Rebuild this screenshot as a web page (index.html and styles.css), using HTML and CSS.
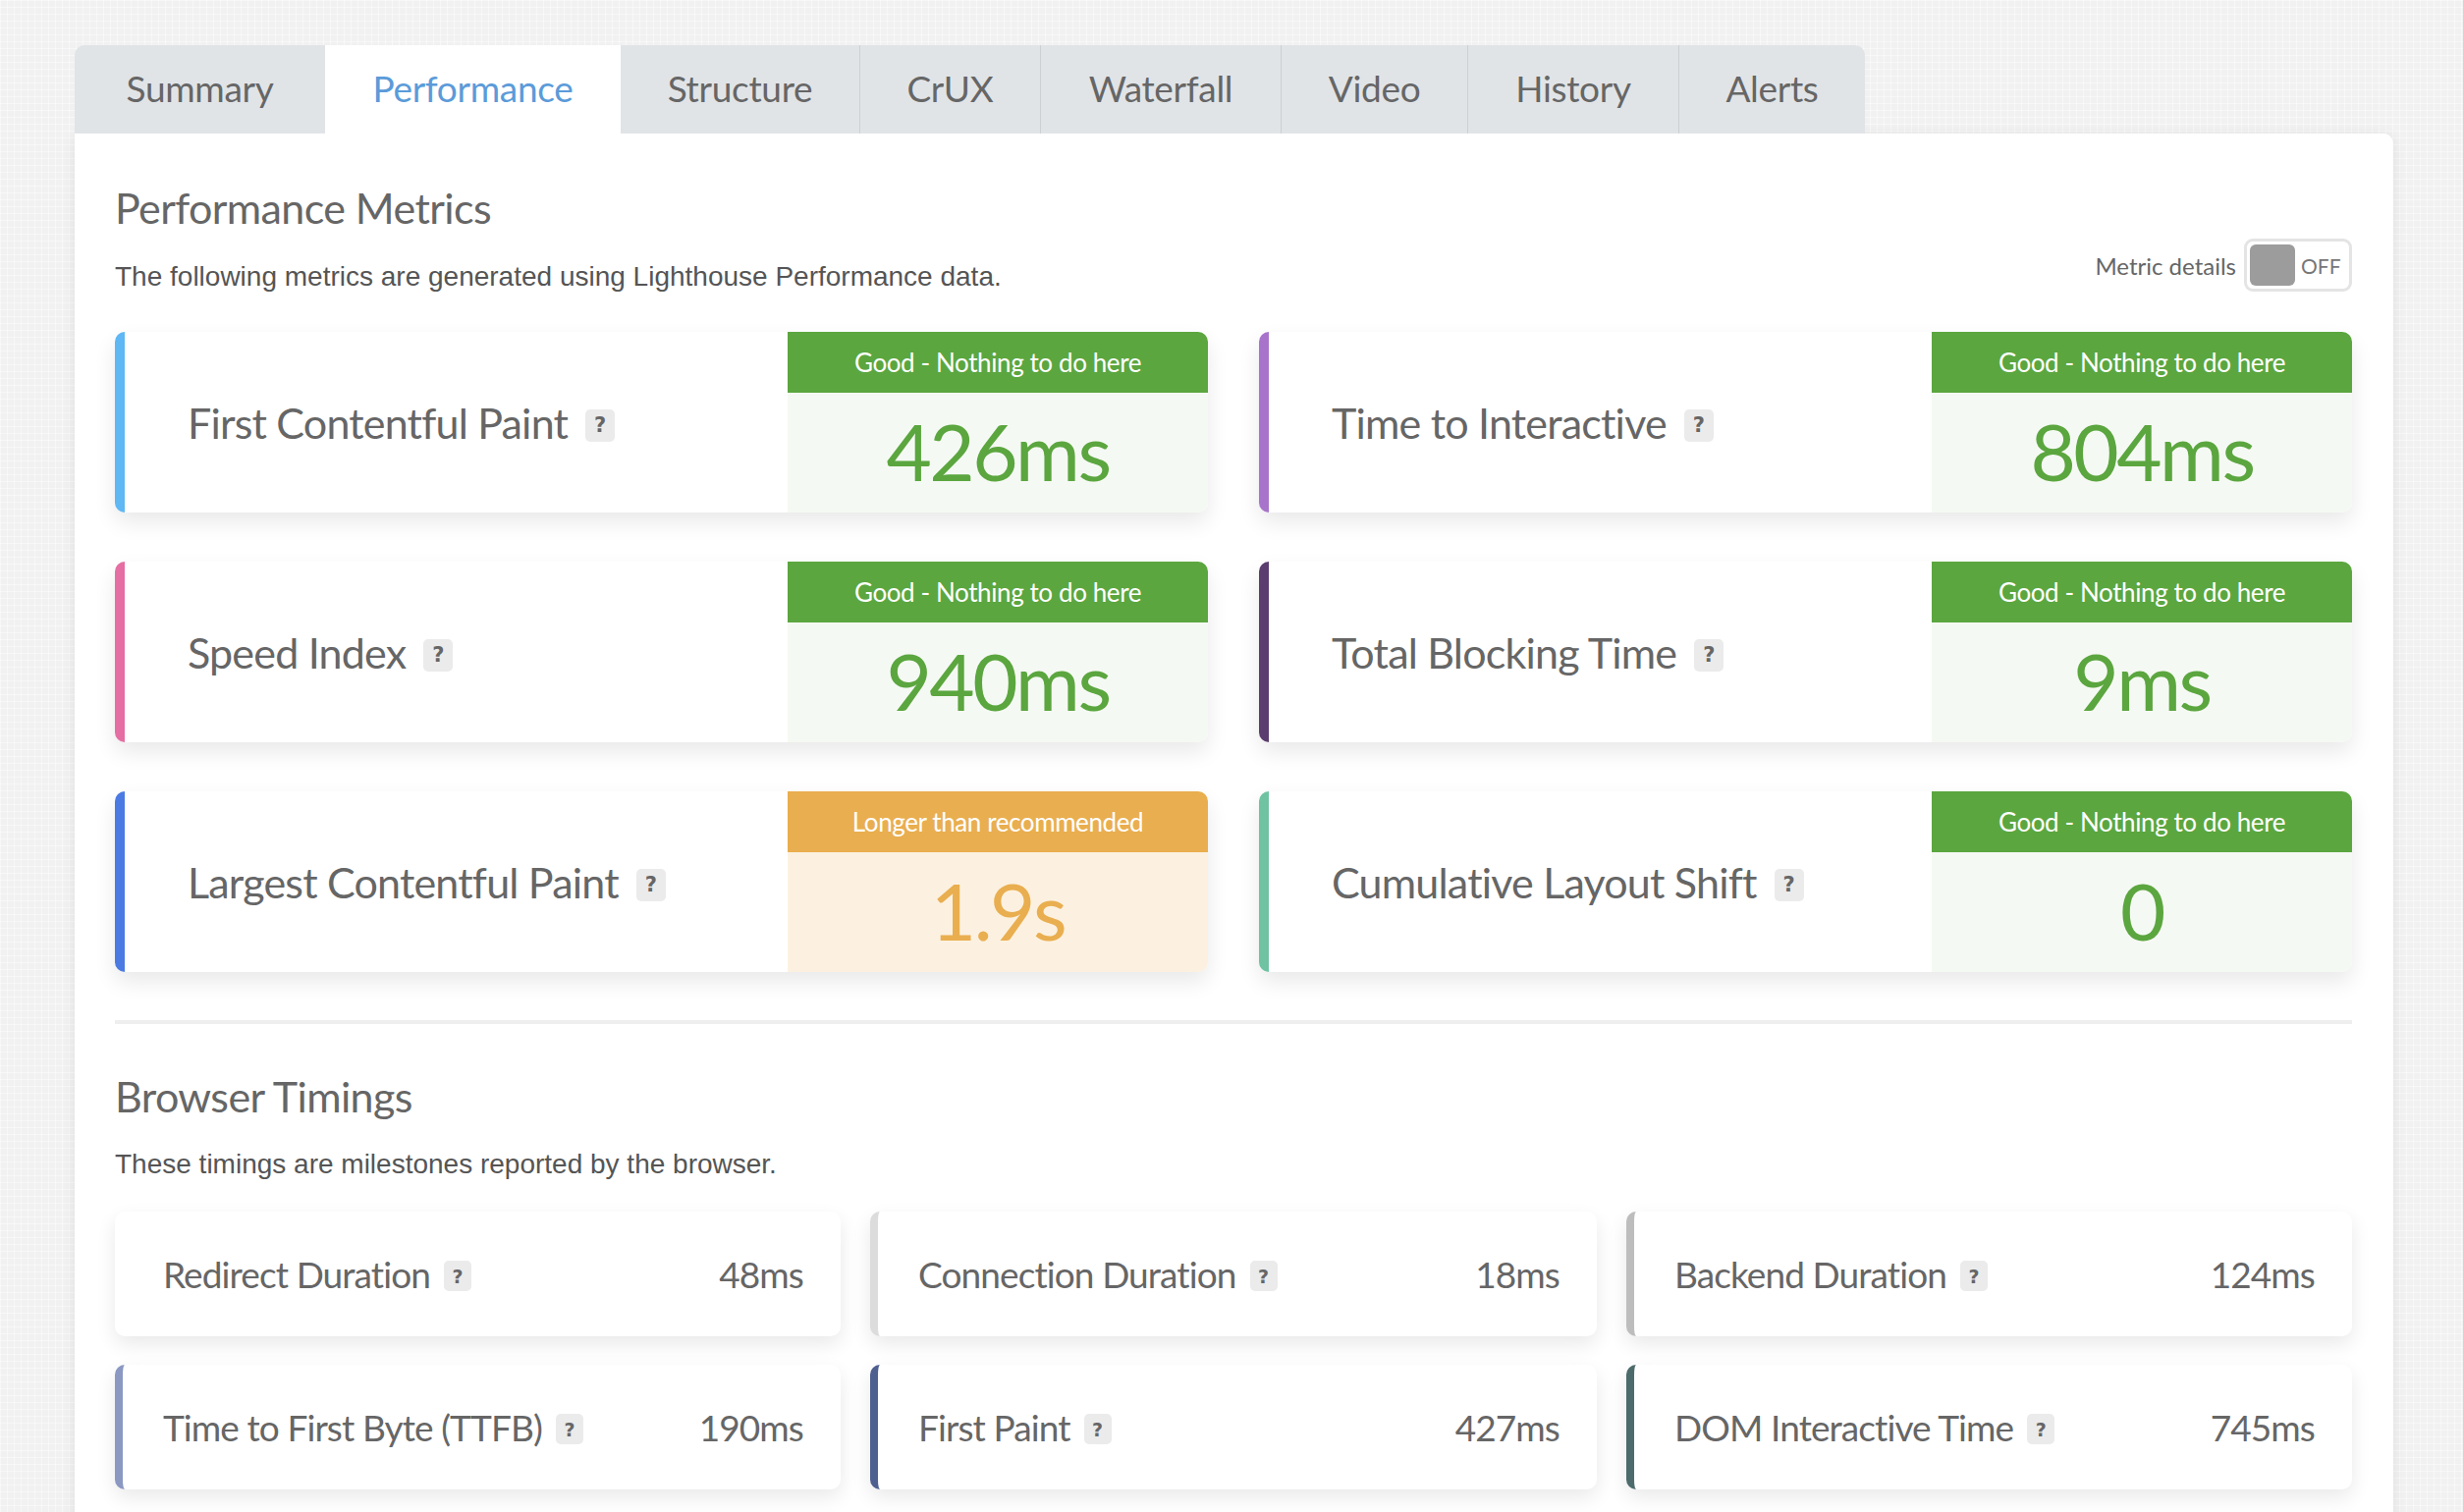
FILE: index.html
```html
<!DOCTYPE html>
<html lang="en">
<head>
<meta charset="utf-8">
<title>Performance</title>
<link rel="stylesheet" href="styles.css">
</head>
<body>
<div class="page">
  <nav class="tabs">
    <div class="tab first">Summary</div>
    <div class="tab active">Performance</div>
    <div class="tab">Structure</div>
    <div class="tab">CrUX</div>
    <div class="tab">Waterfall</div>
    <div class="tab">Video</div>
    <div class="tab">History</div>
    <div class="tab last">Alerts</div>
  </nav>
  <main class="panel">
    <section class="section">
      <h2 class="heading">Performance Metrics</h2>
      <div class="desc-row">
        <p class="desc">The following metrics are generated using Lighthouse Performance data.</p>
        <div class="toggle-wrap">
          <span class="toggle-label">Metric details</span>
          <span class="toggle"><span class="knob"></span><span class="off">OFF</span></span>
        </div>
      </div>
      <div class="metrics">
        <div class="metric fcp">
          <div class="metric-name">First Contentful Paint <span class="help">?</span></div>
          <div class="metric-status good"><div class="status-head">Good - Nothing to do here</div><div class="status-val">426ms</div></div>
        </div>
        <div class="metric tti">
          <div class="metric-name">Time to Interactive <span class="help">?</span></div>
          <div class="metric-status good"><div class="status-head">Good - Nothing to do here</div><div class="status-val">804ms</div></div>
        </div>
        <div class="metric si">
          <div class="metric-name">Speed Index <span class="help">?</span></div>
          <div class="metric-status good"><div class="status-head">Good - Nothing to do here</div><div class="status-val">940ms</div></div>
        </div>
        <div class="metric tbt">
          <div class="metric-name">Total Blocking Time <span class="help">?</span></div>
          <div class="metric-status good"><div class="status-head">Good - Nothing to do here</div><div class="status-val">9ms</div></div>
        </div>
        <div class="metric lcp">
          <div class="metric-name">Largest Contentful Paint <span class="help">?</span></div>
          <div class="metric-status warn"><div class="status-head">Longer than recommended</div><div class="status-val">1.9s</div></div>
        </div>
        <div class="metric cls">
          <div class="metric-name">Cumulative Layout Shift <span class="help">?</span></div>
          <div class="metric-status good"><div class="status-head">Good - Nothing to do here</div><div class="status-val">0</div></div>
        </div>
      </div>
    </section>
    <hr class="divider">
    <section class="section timings-section">
      <h2 class="heading">Browser Timings</h2>
      <p class="desc">These timings are milestones reported by the browser.</p>
      <div class="timings">
        <div class="timing t-redirect"><span class="timing-name">Redirect Duration <span class="help">?</span></span><span class="timing-val">48ms</span></div>
        <div class="timing t-conn"><span class="timing-name">Connection Duration <span class="help">?</span></span><span class="timing-val">18ms</span></div>
        <div class="timing t-backend"><span class="timing-name">Backend Duration <span class="help">?</span></span><span class="timing-val">124ms</span></div>
        <div class="timing t-ttfb"><span class="timing-name">Time to First Byte (TTFB) <span class="help">?</span></span><span class="timing-val">190ms</span></div>
        <div class="timing t-fp"><span class="timing-name">First Paint <span class="help">?</span></span><span class="timing-val">427ms</span></div>
        <div class="timing t-dom"><span class="timing-name">DOM Interactive Time <span class="help">?</span></span><span class="timing-val">745ms</span></div>
      </div>
    </section>
  </main>
</div>
</body>
</html>
```
FILE: styles.css
```css
* { box-sizing: border-box; }
html, body { margin: 0; padding: 0; }
body {
  background-color: #f1f1f1;
  background-image:
    linear-gradient(rgba(255,255,255,0.45) 1px, transparent 1px),
    linear-gradient(90deg, rgba(255,255,255,0.45) 1px, transparent 1px);
  background-size: 7px 7px;
  font-family: "Lato", "Noto Sans", sans-serif;
  color: #666;
  height: 1540px;
  overflow: hidden;
}
.page { padding: 46px 0 0 76px; }

.tabs { display: flex; height: 90px; }
.tab {
  display: flex; align-items: center; justify-content: center;
  background: #e1e4e7;
  color: #666;
  font-size: 37px;
  padding: 0 40px 4px;
  border-left: 1px solid #cdd0d3;
  letter-spacing: -0.3px;
}
.tab.first { border-left: none; border-top-left-radius: 10px; width: 255px; }
.tab.active { background: #fff; color: #5b9bd9; border-left: none; width: 301px; }
.tab.active + .tab { border-left: none; }
.tab.last { border-top-right-radius: 10px; }
.tab:nth-child(3) { width: 243px; }
.tab:nth-child(4) { width: 184px; }
.tab:nth-child(5) { width: 245px; }
.tab:nth-child(6) { width: 190px; }
.tab:nth-child(7) { width: 215px; }
.tab:nth-child(8) { width: 190px; }

.panel {
  width: 2361px;
  background: #fff;
  border-top-right-radius: 10px;
  box-shadow: 0 2px 14px rgba(0,0,0,0.08);
  padding: 0 42px 60px 41px;
  min-height: 1500px;
}
.section { display: flex; flex-direction: column; }
.heading {
  margin: 0;
  padding-top: 49px;
  font-size: 43px;
  font-weight: 400;
  line-height: 54px;
  color: #666;
  letter-spacing: -0.6px;
}
.desc {
  margin: 0;
  font-family: "Liberation Sans", Arial, sans-serif;
  font-size: 28px;
  color: #555;
  line-height: 36px;
}
.desc-row {
  display: flex; justify-content: space-between; align-items: flex-start;
}
.desc-row .desc { margin-top: 25px; }
.toggle-wrap { display: flex; align-items: center; gap: 8px; margin-top: 4px; }
.toggle-label { font-size: 24px; color: #666; }
.toggle {
  display: flex; align-items: center; gap: 6px;
  width: 110px; height: 54px;
  border: 3px solid #e4e4e4; border-radius: 9px;
  padding: 3px;
}
.knob { width: 46px; height: 42px; background: #9c9c9c; border-radius: 6px; }
.off { font-size: 21px; color: #777; }

.metrics {
  display: grid;
  grid-template-columns: 1113px 1113px;
  column-gap: 52px;
  row-gap: 50px;
  margin-top: 38px;
}
.metric {
  display: flex;
  height: 184px;
  border-radius: 10px;
  border-left: 10px solid #5fb7f3;
  background: #fff;
  box-shadow: 0 10px 22px rgba(0,0,0,0.09);
  overflow: hidden;
}
.metric.tti { border-left-color: #a874cb; }
.metric.si { border-left-color: #e56fa3; }
.metric.tbt { border-left-color: #5c3d6f; }
.metric.lcp { border-left-color: #4b7be2; }
.metric.cls { border-left-color: #6fc3a2; }
.metric-name {
  flex: 1;
  display: flex; align-items: center;
  padding-left: 64px;
  font-size: 43px;
  color: #666;
  letter-spacing: -0.8px;
}
.help {
  display: inline-flex; align-items: center; justify-content: center;
  width: 30px; height: 33px;
  margin-left: 18px;
  margin-top: 6px;
  background: #ebebeb;
  border-radius: 5px;
  font-family: "DejaVu Sans", sans-serif;
  font-weight: 700;
  font-size: 21px;
  color: #666;
  letter-spacing: 0;
}
.metric-status { width: 428px; display: flex; flex-direction: column; }
.status-head {
  height: 62px;
  display: flex; align-items: center; justify-content: center;
  color: #fff;
  font-size: 26px;
  letter-spacing: -0.4px;
}
.status-val {
  flex: 1;
  display: flex; align-items: center; justify-content: center;
  font-size: 80px;
  letter-spacing: -2.5px;
  padding-bottom: 4px;
}
.good .status-head { background: #5ba63f; }
.good .status-val { background: #f5f9f3; color: #5ba63f; }
.warn .status-head { background: #e9ae4f; }
.warn .status-val { background: #fcf1e0; color: #e9ae4f; }

.divider {
  border: none;
  height: 4px;
  background: #eeeeee;
  margin: 49px 0 0;
}
.timings-section .heading { padding-top: 47px; }
.timings-section .desc { margin-top: 24px; }

.timings {
  display: grid;
  grid-template-columns: 739px 740px 739px;
  column-gap: 30px;
  row-gap: 29px;
  margin-top: 30px;
}
.timing {
  display: flex; align-items: center; justify-content: space-between;
  height: 127px;
  border-radius: 10px;
  border-left: 8px solid #fff;
  background: #fff;
  box-shadow: 0 8px 20px rgba(0,0,0,0.09);
  padding: 0 38px 0 41px;
  font-size: 37px;
  color: #666;
  letter-spacing: -0.9px;
}
.timing-name { display: flex; align-items: center; }
.timing .help { width: 28px; height: 31px; margin-left: 14px; margin-top: 4px; font-size: 19px; }
.t-conn { border-left-color: #dcdcdc; }
.t-backend { border-left-color: #bdbdbd; }
.t-ttfb { border-left-color: #8a98c2; }
.t-fp { border-left-color: #4e6090; }
.t-dom { border-left-color: #4d6b6b; }
```
